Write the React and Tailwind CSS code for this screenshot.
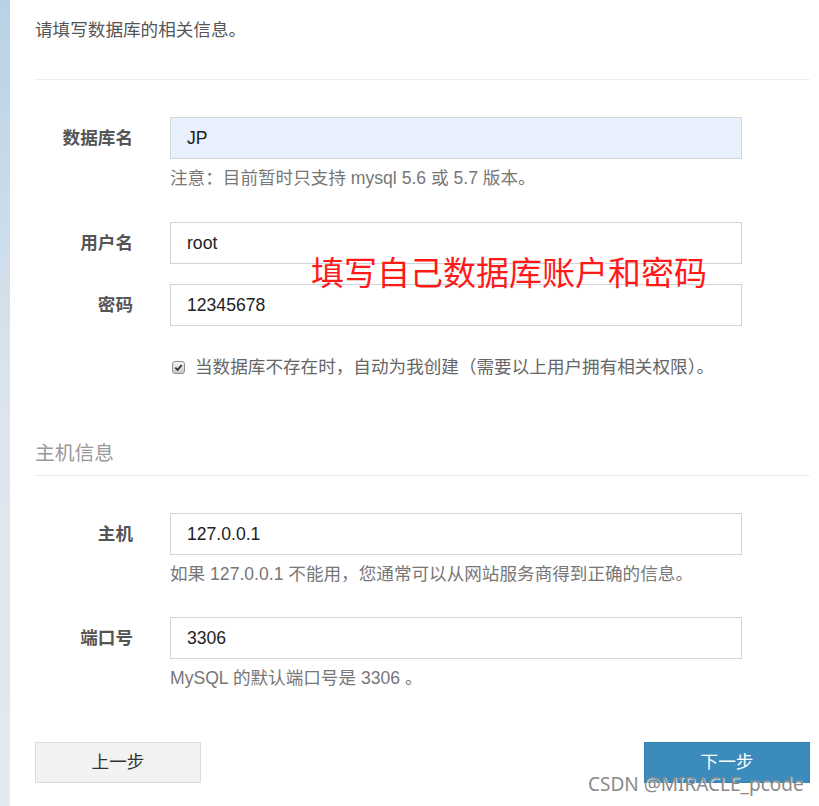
import React, { useState } from "react";

const font = { fontFamily: '"Liberation Sans", "Noto Sans CJK SC", sans-serif' };

const Field = ({ label, value, autofill, hint, className = "" }) => (
  <div className={className}>
    <div className="flex items-center">
      <label className="w-[98px] shrink-0 text-right text-[17.6px] font-bold text-[#555] whitespace-nowrap">
        {label}
      </label>
      <input
        type="text"
        defaultValue={value}
        className={`ml-[37px] w-[572px] h-[42px] px-[16px] border border-[#cfd4dd] text-[17.6px] text-[#222] outline-none ${
          autofill ? "bg-[#e8f0fe]" : "bg-white"
        }`}
      />
    </div>
    {hint && (
      <p className="ml-[135px] mt-[7px] text-[17.6px] leading-[24px] text-[#777] whitespace-nowrap">{hint}</p>
    )}
  </div>
);

export default function App() {
  const [checked, setChecked] = useState(true);

  return (
    <div className="flex w-[819px] h-[806px] overflow-hidden bg-white" style={font}>
      {/* side strip */}
      <div className="w-[10px] shrink-0 bg-gradient-to-b from-[#b8d2e5] via-[#dce5ee] to-[#e4e9ef]" />

      <div className="relative flex-1 pl-[25px] pr-[9px] pt-[18px]">
        <p className="text-[17.6px] leading-[24px] text-[#555]">请填写数据库的相关信息。</p>
        <div className="mt-[37px] h-px bg-[#eeeeee]" />

        <Field className="mt-[37px]" label="数据库名" value="JP" autofill hint="注意：目前暂时只支持 mysql 5.6 或 5.7 版本。" />
        <Field className="mt-[32px]" label="用户名" value="root" />
        <Field className="mt-[20px]" label="密码" value="12345678" />

        <label className="ml-[137px] mt-[29px] flex items-center gap-[10px] cursor-pointer leading-[24px]">
          <input
            type="checkbox"
            className="hidden"
            checked={checked}
            onChange={() => setChecked(!checked)}
          />
          <span className="flex h-[13px] w-[13px] shrink-0 items-center justify-center rounded-[3px] border border-[#8f8f8f] bg-gradient-to-b from-[#f4f4f4] to-[#c9c9c9]">
            {checked && (
              <svg viewBox="0 0 10 10" className="h-[9px] w-[9px]">
                <path d="M1.5 5.2 L4 7.6 L8.6 2.2" fill="none" stroke="#333" strokeWidth="2" />
              </svg>
            )}
          </span>
          <span className="text-[17.6px] text-[#666] whitespace-nowrap">
            当数据库不存在时，自动为我创建（需要以上用户拥有相关权限）。
          </span>
        </label>

        <h3 className="mt-[61px] text-[19.8px] leading-[26px] text-[#999]">主机信息</h3>
        <div className="mt-[9px] h-px bg-[#eeeeee]" />

        <Field className="mt-[37px]" label="主机" value="127.0.0.1" hint="如果 127.0.0.1 不能用，您通常可以从网站服务商得到正确的信息。" />
        <Field className="mt-[31px]" label="端口号" value="3306" hint="MySQL 的默认端口号是 3306 。" />

        <div className="mt-[52px] flex justify-between">
          <button className="w-[166px] h-[41px] border border-[#dcdcdc] bg-[#f2f2f2] text-[17.6px] text-[#333]">
            上一步
          </button>
          <button className="w-[166px] h-[41px] border border-[#3580b0] bg-[#3b8cbd] text-[17.6px] text-white">
            下一步
          </button>
        </div>

        {/* annotation */}
        <div className="absolute left-[301px] top-[255px] text-[33px] leading-[38px] text-[#ff1a1a] whitespace-nowrap">
          填写自己数据库账户和密码
        </div>

        {/* watermark */}
        <div
          className="absolute left-[578px] top-[771px] text-[19px] leading-[26px] text-[#8a8a8a] whitespace-nowrap"
          style={{ fontFamily: '"Noto Sans", sans-serif', textShadow: "1px 1px 1px rgba(255,255,255,0.8)" }}
        >
          CSDN @MIRACLE_pcode
        </div>
      </div>
    </div>
  );
}
